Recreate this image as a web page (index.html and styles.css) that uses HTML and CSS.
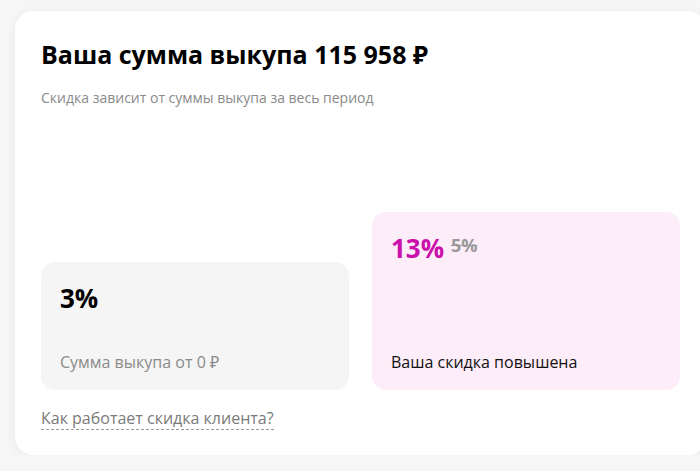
FILE: index.html
```html
<!DOCTYPE html>
<html lang="ru">
<head>
    <meta charset="UTF-8">
    <meta name="viewport" content="width=device-width, initial-scale=1.0">
    <title>Скидка клиента</title>
    <link rel="stylesheet" href="styles.css">
</head>
<body>
    <div class="discount-card">
        <h1 class="discount-title">Ваша сумма выкупа 115&nbsp;958&nbsp;₽</h1>
        <p class="discount-subtitle">Скидка зависит от суммы выкупа за весь период</p>

        <div class="levels">
            <div class="level level-base">
                <div class="level-value">3%</div>
                <div class="level-note">Сумма выкупа от 0&nbsp;₽</div>
            </div>
            <div class="level level-current">
                <div class="level-value">13% <s class="level-old">5%</s></div>
                <div class="level-note">Ваша скидка повышена</div>
            </div>
        </div>

        <a href="#" class="discount-help">Как работает скидка клиента?</a>
    </div>
</body>
</html>
```

FILE: styles.css
```css
* {
    margin: 0;
    padding: 0;
    box-sizing: border-box;
}

body {
    font-family: 'Open Sans', 'Noto Sans', sans-serif;
    background: #f6f6f6;
    padding: 11px 0 0 15px;
    overflow: hidden;
    color: #000;
}

.discount-card {
    width: 691px;
    height: 444px;
    background: white;
    border-radius: 18px;
    box-shadow: 0 2px 12px rgba(0, 0, 0, 0.06);
    padding: 27px 26px 0;
}

.discount-title {
    font-size: 25px;
    line-height: 32px;
    font-weight: 700;
}

.discount-subtitle {
    font-size: 14px;
    line-height: 18px;
    color: #8a8a8a;
    margin-top: 19px;
}

.levels {
    display: flex;
    align-items: flex-end;
    gap: 23px;
    margin-top: 105px;
}

.level {
    width: 308px;
    border-radius: 14px;
    padding: 18px 19px 17px;
    display: flex;
    flex-direction: column;
    justify-content: space-between;
}

.level-base {
    height: 128px;
    background: #f5f5f5;
}

.level-current {
    height: 178px;
    background: #fdedf8;
}

.level-value {
    font-size: 26px;
    line-height: 36px;
    font-weight: 700;
}

.level-current .level-value {
    color: #cb11ab;
}

/* old rate sits raised next to the new one */
.level-old {
    font-size: 18px;
    line-height: 30px;
    color: #999;
    vertical-align: top;
}

.level-note {
    font-size: 16px;
    line-height: 22px;
    color: #8a8a8a;
}

.level-current .level-note {
    color: #111;
}

.discount-help {
    display: inline-block;
    margin-top: 17px;
    font-size: 16px;
    line-height: 22px;
    color: #7a7a7a;
    text-decoration: none;
    border-bottom: 1px dashed #9a9a9a;
}
```
